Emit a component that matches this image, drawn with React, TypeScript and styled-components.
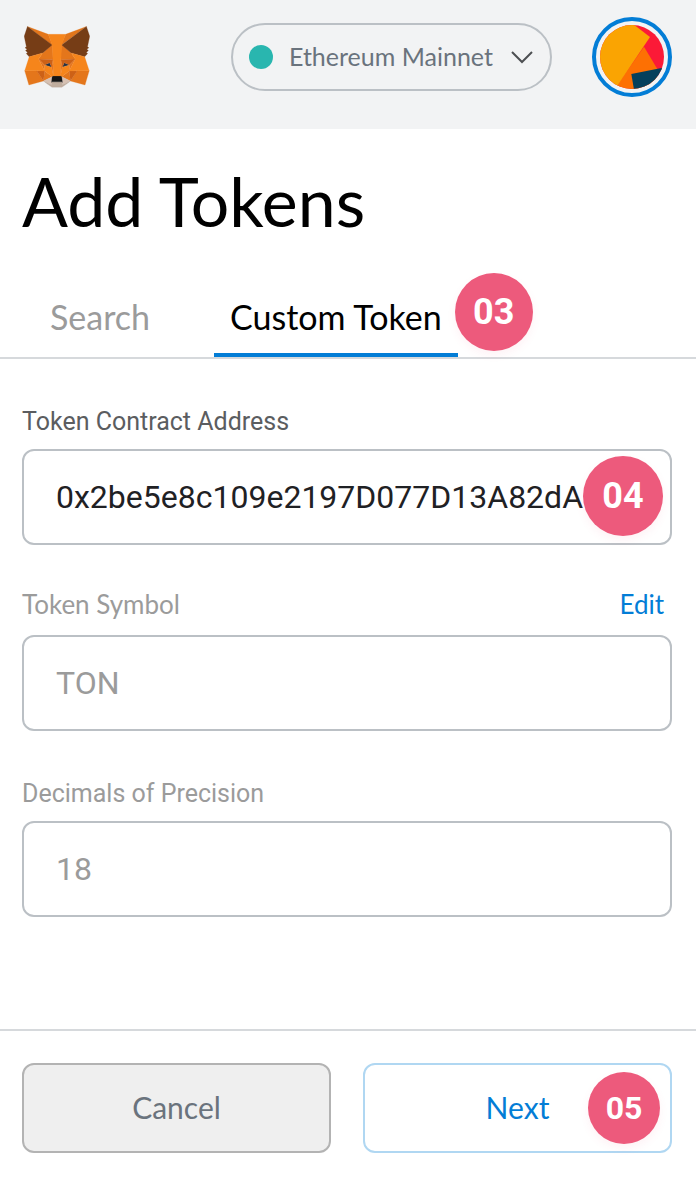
import React from 'react';
import styled, { createGlobalStyle, css } from 'styled-components';

const GlobalStyle = createGlobalStyle`
  *, *::before, *::after { box-sizing: border-box; }
  body { margin: 0; background: #fff; }
  button, input, select { font: inherit; color: inherit; margin: 0; }
`;

const display = css`
  font-family: Lato, 'Liberation Sans', sans-serif;
`;
const text = css`
  font-family: Roboto, 'Liberation Sans', sans-serif;
`;

const Page = styled.div`
  ${display}
  min-height: 100vh;
  display: flex;
  flex-direction: column;
  background: #fff;
  color: #000;
`;

const Header = styled.header`
  display: flex;
  align-items: center;
  gap: 40px;
  padding: 17px 24px 32px;
  background: #f2f3f4;
`;

const HomeLink = styled.a`
  display: flex;
  margin-right: auto;
`;

const NetworkPicker = styled.label`
  display: flex;
  align-items: center;
  height: 68px;
  padding: 0 17px 0 16px;
  border: 2px solid #bbc0c5;
  border-radius: 34px;
  color: #6a737d;
`;

const NetworkDot = styled.span`
  width: 24px;
  height: 24px;
  margin-right: 16px;
  border-radius: 50%;
  background: #29b6af;
`;

const NetworkSelect = styled.select`
  appearance: none;
  border: 0;
  padding: 0 0 2px;
  margin-right: 18px;
  background: none;
  font-size: 25px;
  line-height: 32px;
`;

const AccountButton = styled.button`
  display: flex;
  width: 80px;
  height: 80px;
  padding: 4px;
  border: 4px solid #037dd6;
  border-radius: 50%;
  background: none;
`;

const Title = styled.h1`
  margin: 32px 22px 40px;
  font-size: 68px;
  font-weight: 400;
  line-height: 80px;
`;

const Tabs = styled.div`
  display: flex;
  gap: 48px;
  padding: 0 34px;
  border-bottom: 2px solid #d6d9dc;
`;

const TabSlot = styled.div`
  position: relative;
  display: flex;
`;

const Tab = styled.button<{ $active?: boolean }>`
  padding: 16px;
  border: 0;
  border-bottom: 4px solid ${(p) => (p.$active ? '#037dd6' : 'transparent')};
  background: none;
  color: ${(p) => (p.$active ? '#000' : '#9b9b9b')};
  font-size: 34px;
  line-height: 40px;
`;

const StepBadge = styled.span<{ $size: number; $top: number; $right: number }>`
  ${text}
  position: absolute;
  top: ${(p) => p.$top}px;
  right: ${(p) => p.$right}px;
  display: flex;
  align-items: center;
  justify-content: center;
  width: ${(p) => p.$size}px;
  height: ${(p) => p.$size}px;
  border-radius: 50%;
  background: #ed5a7c;
  box-shadow: 0 4px 8px rgba(237, 90, 124, 0.08);
  color: #fff;
  font-size: ${(p) => (p.$size > 72 ? 36 : 32)}px;
  font-weight: 700;
  line-height: 40px;
  pointer-events: none;
`;

const Form = styled.form`
  flex: 1;
  display: flex;
  flex-direction: column;
`;

const Fields = styled.div`
  ${text}
  flex: 1;
  display: flex;
  flex-direction: column;
  gap: 46px;
  padding: 46px 24px 112px 22px;
`;

const Field = styled.div`
  display: flex;
  flex-direction: column;
`;

const LabelRow = styled.div`
  display: flex;
  justify-content: space-between;
  height: 44px;
`;

const Label = styled.label<{ $muted?: boolean; $display?: boolean }>`
  ${(p) => p.$display && display}
  color: ${(p) => (p.$muted ? '#9b9b9b' : '#5b5d60')};
  font-size: ${(p) => (p.$display ? 26 : 25)}px;
  line-height: ${(p) => (p.$display ? 26 : 34)}px;
`;

const EditLink = styled.a`
  ${display}
  margin-right: 8px;
  color: #037dd6;
  font-size: 26px;
  line-height: 26px;
  text-decoration: none;
`;

const InputBox = styled.div`
  position: relative;
  display: flex;
`;

const Input = styled.input<{ $muted?: boolean }>`
  flex: 1;
  min-width: 0;
  height: 96px;
  padding: 0 32px;
  border: 2px solid #bbc0c5;
  border-radius: 12px;
  background: #fff;
  color: ${(p) => (p.$muted ? '#9b9b9b' : '#1f2124')};
  font-size: 32px;
`;

const Footer = styled.footer`
  display: flex;
  gap: 32px;
  padding: 32px 24px 27px 22px;
  border-top: 2px solid #d6d9dc;
`;

const ActionButton = styled.button<{ $primary?: boolean }>`
  position: relative;
  flex: 1;
  height: 90px;
  padding: 0 0 2px;
  border: 2px solid ${(p) => (p.$primary ? '#b0d7f2' : '#b3b3b3')};
  border-radius: 12px;
  background: ${(p) => (p.$primary ? '#fff' : '#efefef')};
  color: ${(p) => (p.$primary ? '#037dd6' : '#6a737d')};
  font-size: 30px;
  line-height: 40px;
`;

const foxFacets: [string, string][] = [
  ['#e2761b', '274.1,35.5 174.6,109.4 193,65.8'],
  ['#e4761b', '44.4,35.5 143.1,110.1 125.6,65.8'],
  ['#e4761b', '238.3,206.8 211.8,247.4 268.5,263 284.8,207.7'],
  ['#e4761b', '33.9,207.7 50.1,263 106.8,247.4 80.3,206.8'],
  ['#e4761b', '103.6,138.2 87.8,162.1 144.1,164.6 142.1,104.1'],
  ['#e4761b', '214.9,138.2 175.9,103.4 174.6,164.6 230.8,162.1'],
  ['#e4761b', '106.8,247.4 140.6,230.9 111.4,208.1'],
  ['#e4761b', '177.9,230.9 211.8,247.4 207.1,208.1'],
  ['#d7c1b3', '211.8,247.4 177.9,230.9 180.6,253 180.3,262.3'],
  ['#d7c1b3', '106.8,247.4 138.3,262.3 138.1,253 140.6,230.9'],
  ['#233447', '138.8,193.5 110.6,185.2 130.5,176.1'],
  ['#233447', '179.7,193.5 188,176.1 208,185.2'],
  ['#cd6116', '106.8,247.4 111.6,206.8 80.3,207.7'],
  ['#cd6116', '207,206.8 211.8,247.4 238.3,207.7'],
  ['#cd6116', '230.8,162.1 174.6,164.6 179.8,193.5 188.1,176.1 208.1,185.2'],
  ['#cd6116', '110.6,185.2 130.6,176.1 138.8,193.5 144.1,164.6 87.8,162.1'],
  ['#e4751f', '87.8,162.1 111.4,208.1 110.6,185.2'],
  ['#e4751f', '208.1,185.2 207.1,208.1 230.8,162.1'],
  ['#e4751f', '144.1,164.6 138.8,193.5 145.4,227.6 146.9,182.7'],
  ['#e4751f', '174.6,164.6 171.9,182.6 173.1,227.6 179.8,193.5'],
  ['#f6851b', '179.8,193.5 173.1,227.6 177.9,230.9 207.1,208.1 208.1,185.2'],
  ['#f6851b', '110.6,185.2 111.4,208.1 140.6,230.9 145.4,227.6 138.8,193.5'],
  ['#c0ad9e', '180.3,262.3 180.6,253 178.1,250.8 140.4,250.8 138.1,253 138.3,262.3 106.8,247.4 117.8,256.4 140.1,271.9 178.4,271.9 200.8,256.4 211.8,247.4'],
  ['#161616', '177.9,230.9 173.1,227.6 145.4,227.6 140.6,230.9 138.1,253 140.4,250.8 178.1,250.8 180.6,253'],
  ['#763d16', '278.3,114.2 286.8,73.4 274.1,35.5 177.9,106.9 214.9,138.2 267.2,153.5 278.8,140 273.8,136.4 281.8,129.1 275.6,124.3 283.6,118.2'],
  ['#763d16', '31.8,73.4 40.3,114.2 34.9,118.2 42.9,124.3 36.8,129.1 44.8,136.4 39.8,140 51.3,153.5 103.6,138.2 140.6,106.9 44.4,35.5'],
  ['#f6851b', '267.2,153.5 214.9,138.2 230.8,162.1 207.1,208.1 238.3,207.7 284.8,207.7'],
  ['#f6851b', '103.6,138.2 51.3,153.5 33.9,207.7 80.3,207.7 111.4,208.1 87.8,162.1'],
  ['#f6851b', '174.6,164.6 177.9,106.9 193.1,65.8 125.6,65.8 140.6,106.9 144.1,164.6 145.3,182.8 145.4,227.6 173.1,227.6 173.3,182.8'],
];

const FoxLogo = () => (
  <svg width="66" height="62" viewBox="31 34 257 240" aria-hidden="true">
    {foxFacets.map(([fill, points]) => (
      <polygon key={points} fill={fill} stroke={fill} strokeLinejoin="round" points={points} />
    ))}
  </svg>
);

const Chevron = () => (
  <svg width="22" height="14" viewBox="0 0 22 14" fill="none" aria-hidden="true">
    <path d="M1 2 L11 12 L21 2" stroke="#4d4f52" strokeWidth="2" />
  </svg>
);

const AccountIcon = () => (
  <svg width="64" height="64" viewBox="60 60 192 192" aria-hidden="true">
    <clipPath id="account-disc">
      <circle cx="156" cy="156" r="96" />
    </clipPath>
    <g clipPath="url(#account-disc)">
      <rect x="60" y="60" width="192" height="192" fill="#fb1a37" />
      <polygon points="192,125 232,192 232,260 100,260 112,240" fill="#fd7003" />
      <polygon points="50,50 150,50 210,96 112,242 50,252" fill="#faa402" />
      <polygon points="154,207 256,187 256,260 163,260" fill="#05405c" />
    </g>
  </svg>
);

export default function App() {
  return (
    <Page>
      <GlobalStyle />
      <Header>
        <HomeLink href="#" aria-label="Home">
          <FoxLogo />
        </HomeLink>
        <NetworkPicker>
          <NetworkDot />
          <NetworkSelect aria-label="Network">
            <option>Ethereum Mainnet</option>
          </NetworkSelect>
          <Chevron />
        </NetworkPicker>
        <AccountButton type="button" aria-label="Account">
          <AccountIcon />
        </AccountButton>
      </Header>

      <Title>Add Tokens</Title>

      <Tabs role="tablist">
        <TabSlot>
          <Tab type="button" role="tab" aria-selected={false}>Search</Tab>
        </TabSlot>
        <TabSlot>
          <Tab type="button" role="tab" aria-selected $active>Custom Token</Tab>
          <StepBadge $size={78} $top={-8} $right={-75}>03</StepBadge>
        </TabSlot>
      </Tabs>

      <Form onSubmit={(e) => e.preventDefault()}>
        <Fields>
          <Field>
            <LabelRow>
              <Label htmlFor="address">Token Contract Address</Label>
            </LabelRow>
            <InputBox>
              <Input id="address" defaultValue="0x2be5e8c109e2197D077D13A82dA" />
              <StepBadge $size={80} $top={7} $right={9}>04</StepBadge>
            </InputBox>
          </Field>
          <Field>
            <LabelRow>
              <Label htmlFor="symbol" $muted $display>Token Symbol</Label>
              <EditLink href="#">Edit</EditLink>
            </LabelRow>
            <InputBox>
              <Input id="symbol" defaultValue="TON" $muted />
            </InputBox>
          </Field>
          <Field>
            <LabelRow>
              <Label htmlFor="decimals" $muted>Decimals of Precision</Label>
            </LabelRow>
            <InputBox>
              <Input id="decimals" defaultValue="18" $muted />
            </InputBox>
          </Field>
        </Fields>
        <Footer>
          <ActionButton type="button">Cancel</ActionButton>
          <ActionButton type="submit" $primary>
            Next
            <StepBadge $size={72} $top={7} $right={10}>05</StepBadge>
          </ActionButton>
        </Footer>
      </Form>
    </Page>
  );
}
